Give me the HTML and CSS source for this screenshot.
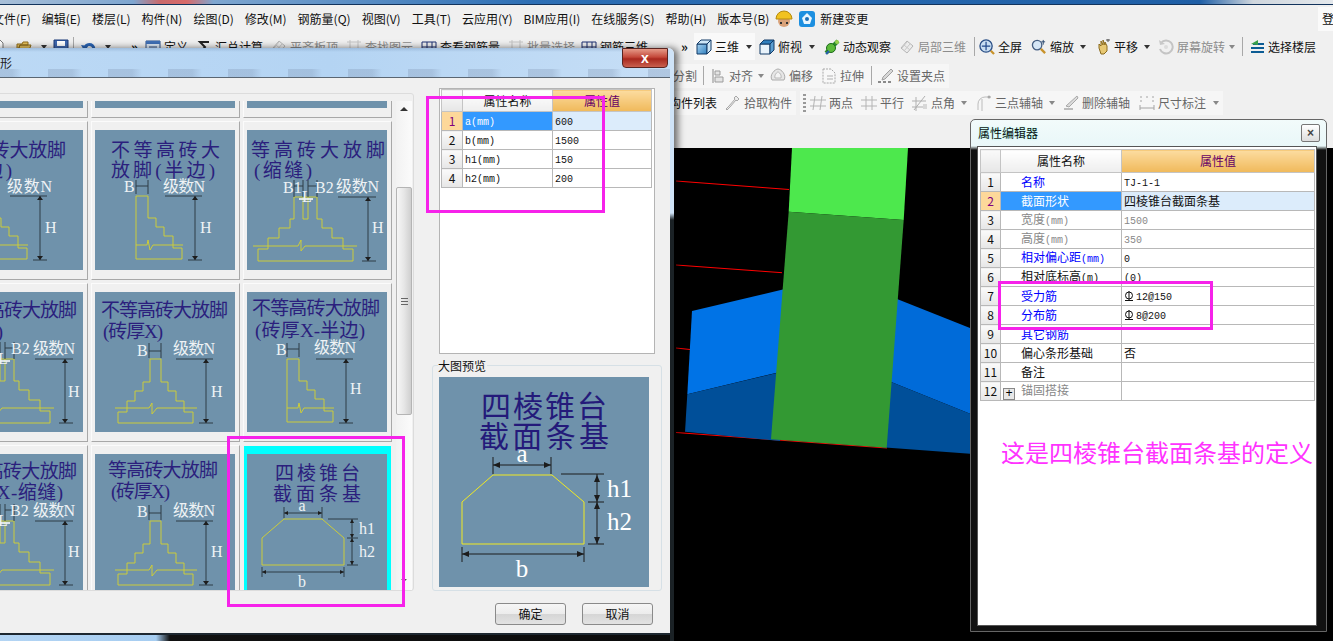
FILE: index.html
```html
<!DOCTYPE html>
<html lang="zh">
<head>
<meta charset="utf-8">
<title>属性编辑器</title>
<link rel="stylesheet" href="styles.css">
</head>
<body>
<svg class="defs" width="0" height="0" aria-hidden="true">
  <defs>
    <linearGradient id="gb" x1="0" y1="0" x2="1" y2="1"><stop offset="0" stop-color="#a9d4f2"/><stop offset="1" stop-color="#2f7fbe"/></linearGradient>
    <symbol id="i-cube" viewBox="0 0 16 16"><path d="M1 5h10v10H1z" fill="url(#gb)" stroke="#123a66"/><path d="M1 5l4-4h10l-4 4zM11 5l4-4v10l-4 4z" fill="#cfe7f7" stroke="#123a66"/></symbol>
    <symbol id="i-top" viewBox="0 0 16 16"><path d="M1 5h10v10H1z" fill="#e8f2fa" stroke="#123a66"/><path d="M1 5l4-4h10l-4 4z" fill="#2f7fbe" stroke="#123a66"/><path d="M11 5l4-4v10l-4 4z" fill="#5b9ed1" stroke="#123a66"/></symbol>
    <symbol id="i-orbit" viewBox="0 0 16 16"><path d="M2 14L14 2" stroke="#2a8a2a" stroke-width="4"/><circle cx="7" cy="9" r="4.5" fill="#5dbb3a" stroke="#1c6a1c"/><path d="M2 15l3-3" stroke="#2a5fb0" stroke-width="2"/><circle cx="13" cy="3" r="2" fill="#9ad14f"/></symbol>
    <symbol id="i-part" viewBox="0 0 16 16" ><path d="M2 9l6-7 6 5-6 7z" fill="#ececec" stroke="#b5b5b5"/><path d="M5 6l6 5M8 3l-5 6M11 5l-6 7" stroke="#c8c8c8" fill="none"/></symbol>
    <symbol id="i-full" viewBox="0 0 17 17"><circle cx="7.5" cy="7.5" r="6.5" fill="#c9def2" stroke="#2b4f86" stroke-width="1.4"/><path d="M7.5 3v9M3 7.5h9" stroke="#234a8c" stroke-width="1.3"/><path d="M12.5 12.5l3.5 3.5" stroke="#c8922a" stroke-width="2.4"/></symbol>
    <symbol id="i-zoom" viewBox="0 0 17 17"><circle cx="6.5" cy="6.5" r="5" fill="#d5e6f6" stroke="#445e82" stroke-width="1.4"/><path d="M10.5 10.5l4.5 4.5" stroke="#c8922a" stroke-width="2.4"/><path d="M13 1v5M11 3h4" stroke="#26466e"/></symbol>
    <symbol id="i-pan" viewBox="0 0 16 16"><path d="M4 9V5l2 2V2l2 4V1l2 5V3l2 4v5l-3 3H6z" fill="#e7c873" stroke="#8a6a1e"/><path d="M11 1h4M13 0v3" stroke="#555"/></symbol>
    <symbol id="i-rot" viewBox="0 0 16 16"><path d="M3 4a6.5 6.5 0 1 1-1 6" fill="none" stroke="#c4c4c4" stroke-width="2"/><path d="M1 1l1 5 5-1z" fill="#c8c8c8"/><circle cx="8" cy="8" r="2" fill="#dcdcdc"/></symbol>
    <symbol id="i-floor" viewBox="0 0 16 16"><path d="M2 13h13M2 9h13M4 5h11" stroke="#0c5c94" stroke-width="2.2"/><path d="M9 1L2 5l7 1" fill="#3aa04a"/></symbol>
    <symbol id="i-align" viewBox="0 0 14 16"><path d="M2 1v14" stroke="#8a8a8a"/><path d="M4 3h5v4H4zM4 9h8v5H4z" fill="#e4e4e4" stroke="#9c9c9c"/></symbol>
    <symbol id="i-offset" viewBox="0 0 16 16"><path d="M2 12C-1 7 5 1 8 1s9 6 6 11z" fill="#e6e6e6" stroke="#acacac"/><path d="M5 10c-1-3 2-6 3-6s4 3 3 6z" fill="#f4f4f4" stroke="#b8b8b8"/></symbol>
    <symbol id="i-stretch" viewBox="0 0 14 16"><path d="M1 1h8l4 4v10H1z" fill="#f8f8f8" stroke="#a8a8a8" stroke-dasharray="2 1"/><path d="M5 8h6M5 11h6" stroke="#b0b0b0"/></symbol>
    <symbol id="i-grip" viewBox="0 0 16 16"><path d="M13 1l2 2-8 8-3 1 1-3z" fill="#d8d8d8" stroke="#a0a0a0"/><path d="M0 14h3M5 14h3M10 14h3" stroke="#8a8a8a" stroke-width="2"/></symbol>
    <symbol id="i-pick" viewBox="0 0 14 16"><path d="M10 1l3 3-2 2-1-1-6 7-3 3-1-1 3-3 6-7-1-1z" fill="#ececec" stroke="#a8a8a8"/></symbol>
    <symbol id="i-two" viewBox="0 0 16 16"><path d="M0 5h16M0 11h16M5 1l-2 14M12 1l-2 14" stroke="#b4b4b4" fill="none"/></symbol>
    <symbol id="i-para" viewBox="0 0 16 16"><path d="M0 5h16M0 11h16M5 1v14M11 1v14" stroke="#b4b4b4" fill="none"/></symbol>
    <symbol id="i-ang" viewBox="0 0 16 16"><path d="M0 6h14M0 12h14M4 2v14M13 1L2 15" stroke="#b0b0b0" fill="none"/><path d="M11 9h4v5h-4z" fill="#d8d8d8"/></symbol>
    <symbol id="i-three" viewBox="0 0 16 16"><path d="M2 15V9a7 7 0 0 1 7-7h6M6 16V4" stroke="#bcbcbc" fill="none"/><circle cx="13" cy="2" r="1.5" fill="#a8a8a8"/></symbol>
    <symbol id="i-del" viewBox="0 0 16 16"><path d="M14 1l1 2-9 9-3-1z" fill="#dcdcdc" stroke="#a8a8a8"/><path d="M1 14h9" stroke="#bcbcbc" stroke-width="2"/></symbol>
    <symbol id="i-size" viewBox="0 0 16 16"><path d="M1 10v5M15 10v5M1 13h14M1 2h2M7 2h2M13 2h2M1 6h2M13 6h2" stroke="#a4a4a4" fill="none"/></symbol>
    <symbol id="i-def" viewBox="0 0 16 16"><path d="M1 2h14v12H1z" fill="#dde8f4" stroke="#2b4f86"/><path d="M1 2h14v3H1z" fill="#3f6fb4"/><path d="M4 8h8M4 11h8" stroke="#2b4f86"/></symbol>
    <symbol id="i-sum" viewBox="0 0 16 16"><path d="M13 3H4l5 5-5 6h9" fill="none" stroke="#222" stroke-width="2"/></symbol>
    <symbol id="i-doc" viewBox="0 0 16 16"><path d="M3 1h8l3 3v11H3z" fill="#fff" stroke="#777"/></symbol>
    <symbol id="i-open" viewBox="0 0 16 16"><path d="M1 5h5l1-2h5v3H4L1 14zM1 14l3-8h11l-3 8z" fill="#e6c15c" stroke="#8f6d1d"/></symbol>
    <symbol id="i-save" viewBox="0 0 16 16"><path d="M1 1h14v14H1z" fill="#3f68b0" stroke="#1d3a78"/><path d="M4 2h8v5H4z" fill="#fff"/></symbol>
    <symbol id="i-undo" viewBox="0 0 16 16"><path d="M4 10C4 4 12 4 13 10c0 2-1 4-3 5" fill="none" stroke="#2a64b4" stroke-width="3"/><path d="M0 6l7 1-3 6z" fill="#2a64b4"/></symbol>
    <symbol id="i-batch" viewBox="0 0 16 16"><path d="M1 3h14M1 13h14M4 1v14M12 1v14" stroke="#c4c4c4"/></symbol>
    <symbol id="i-rebar" viewBox="0 0 16 16"><path d="M1 3h14v10H1zM6 3v10M11 3v10M1 8h14" stroke="#1d2f70" fill="none"/></symbol>
    <g id="half">
      <path class="yl" d="M41 66h12v22h8v9h8v9h9v12h9v11H41z"/>
      <path class="yl" d="M41 115h11l1-5 2 10 3-5h30"/>
      <path class="dk" d="M41 50v14M53 50v14M41 56h12M70 66h37M93 130h14M100 66v64"/>
      <path class="ah" d="M100 66l-3 4h6zM100 130l-3-4h6z"/>
    </g>
    <g id="slot">
      <path class="yl" d="M11 119h10v-11h11V98h11v-9h4V67h23v22h5v9h10v10h11v11h10v12H11z"/>
      <path class="yl" d="M56 67v22h5V67"/>
      <path class="yl" d="M6 116h45l3-6v11l4-5h52"/>
      <path class="dk" d="M47 50v17M56 50v17M61 50v17M70 50v17M47 56h9M61 56h9M91 67h38M115 131h14M121 67v64"/>
      <path class="ah" d="M121 67l-3 4h6zM121 131l-3-4h6z"/>
      <path class="wh" d="M52 69h14"/>
    </g>
    <g id="brick">
      <path class="yl" d="M23 120h9v-11h8V99h8v-9h7V67h11v23h7v9h8v10h8v11h9v11H23z"/>
      <path class="yl" d="M20 116h34l3-5v11l5-6h40"/>
      <path class="dk" d="M54 51v15M66 51v15M54 59h12M81 67h37M104 131h14M111 67v64"/>
      <path class="ah" d="M111 67l-3 4h6zM111 131l-3-4h6z"/>
    </g>
  </defs>
</svg>

<header class="topstrip"></header>

<nav class="menu">
  <span>文件(F)</span><span>编辑(E)</span><span>楼层(L)</span><span>构件(N)</span><span>绘图(D)</span><span>修改(M)</span><span>钢筋量(Q)</span><span>视图(V)</span><span>工具(T)</span><span>云应用(Y)</span><span>BIM应用(I)</span><span>在线服务(S)</span><span>帮助(H)</span><span>版本号(B)</span>
  <span class="menu-icons">
    <svg class="ic20" viewBox="0 0 20 20"><circle cx="10" cy="12" r="6" fill="#d9a27a"/><path d="M2 10a8 8 0 0 1 16 0z" fill="#f1c21f" stroke="#b58a0e"/><path d="M6 14h2M12 14h2" stroke="#333" stroke-width="2"/></svg>
    <svg class="ic16" viewBox="0 0 16 16"><rect x="0" y="0" width="16" height="16" rx="3" fill="#1c8fe0"/><path d="M8 2l5 5-2 6H5L3 7z" fill="#e8f6ff"/><circle cx="8" cy="8" r="2" fill="#1c6fb8"/></svg>
    <span>新建变更</span>
  </span>
  <span class="login">登</span>
</nav>

<section class="bar row1">
  <div class="bar-left">
    <svg class="ic first"><use href="#i-doc"/></svg>
    <svg class="ic ml11"><use href="#i-open"/></svg><i class="caret ml9"></i>
    <svg class="ic ml6"><use href="#i-save"/></svg><i class="sep ml4"></i>
    <svg class="ic ml7"><use href="#i-undo"/></svg><i class="caret ml8"></i>
    <b class="more ml20">»</b>
    <span class="ti ml1"><svg class="ic"><use href="#i-def"/></svg>定义</span>
    <span class="ti ml8"><svg class="ic"><use href="#i-sum"/></svg>汇总计算</span>
    <span class="ti ml8 off"><svg class="ic"><use href="#i-part"/></svg>平齐板顶</span>
    <span class="ti ml8 off"><svg class="ic"><use href="#i-batch"/></svg>查找图元</span>
    <span class="ti ml8"><svg class="ic"><use href="#i-rebar"/></svg>查看钢筋量</span>
    <span class="ti ml8 off"><svg class="ic"><use href="#i-batch"/></svg>批量选择</span>
    <span class="ti ml6"><svg class="ic"><use href="#i-rebar"/></svg>钢筋三维</span>
  </div>
  <b class="more ml4">»</b>
  <span class="pressed"><span class="ti"><svg class="ic"><use href="#i-cube"/></svg>三维</span><i class="caret ml7"></i></span>
  <span class="ti ml4"><svg class="ic"><use href="#i-top"/></svg>俯视</span><i class="caret ml7"></i>
  <span class="ti ml9"><svg class="ic"><use href="#i-orbit"/></svg>动态观察</span>
  <span class="ti ml8 off"><svg class="ic"><use href="#i-part"/></svg>局部三维</span>
  <i class="sep ml8"></i>
  <span class="ti ml4"><svg class="ic"><use href="#i-full"/></svg>全屏</span>
  <span class="ti ml9"><svg class="ic"><use href="#i-zoom"/></svg>缩放</span><i class="caret ml6"></i>
  <span class="ti ml9"><svg class="ic"><use href="#i-pan"/></svg>平移</span><i class="caret ml6"></i>
  <span class="ti ml8 off"><svg class="ic"><use href="#i-rot"/></svg>屏幕旋转</span><i class="caret ml4 faint"></i>
  <i class="sep ml7"></i>
  <span class="ti ml6"><svg class="ic"><use href="#i-floor"/></svg>选择楼层</span>
</section>

<section class="bar row2">
  <div class="band">
    <span class="ti mid">分割</span>
    <i class="sep ml6"></i>
    <span class="ti ml6 mid"><svg class="ic"><use href="#i-align"/></svg>对齐</span><i class="caret ml5 faint"></i>
    <span class="ti ml6 mid"><svg class="ic"><use href="#i-offset"/></svg>偏移</span>
    <span class="ti ml8 mid"><svg class="ic"><use href="#i-stretch"/></svg>拉伸</span>
    <i class="sep ml7"></i>
    <span class="ti ml6 mid"><svg class="ic"><use href="#i-grip"/></svg>设置夹点</span>
  </div>
</section>

<section class="bar row3">
  <div class="band">
    <span class="ti">构件列表</span>
    <span class="ti ml8 mid"><svg class="ic"><use href="#i-pick"/></svg>拾取构件</span>
  </div>
  <div class="band ml4">
    <i class="grip ml3"></i>
    <span class="ti ml4 mid"><svg class="ic"><use href="#i-two"/></svg>两点</span>
    <span class="ti ml8 mid"><svg class="ic"><use href="#i-para"/></svg>平行</span>
    <span class="ti ml8 mid"><svg class="ic"><use href="#i-ang"/></svg>点角</span><i class="caret ml6 faint"></i>
    <span class="ti ml9 mid"><svg class="ic"><use href="#i-three"/></svg>三点辅轴</span><i class="caret ml6 faint"></i>
    <span class="ti ml8 mid"><svg class="ic"><use href="#i-del"/></svg>删除辅轴</span>
    <span class="ti ml9 mid"><svg class="ic"><use href="#i-size"/></svg>尺寸标注</span><i class="caret ml7 faint"></i>
  </div>
</section>

<main class="canvas">
  <svg class="scene" viewBox="670 147 663 494" width="663" height="494">
    <path class="red" d="M676 180l113 8.500M676 264l106 7.700M676 347l14 1.500M676 431.500l211 15.500"/>
    <path fill="#0073e6" d="M692 310l95-22.500-5 83-94.700 22.800z"/>
    <path fill="#004f99" d="M687.300 393.300L782 370.800 780 440l-95-9.300z"/>
    <path fill="#006bd9" d="M892 295.900L970 327v85.700L885 378.600z"/>
    <path fill="#004f99" d="M885 378.600l85 34.100v40l-88-6.500z"/>
    <path fill="#4de84d" d="M792 147h116l-4.300 72-115-8.300z"/>
    <path fill="#339933" d="M788.700 210.700l115 8.300-17 227.700L771 438.300z"/>
  </svg>
</main>

<div class="dialog">
  <div class="dlg-title">
    <span>图形</span>
    <button class="dlg-close" type="button">x</button>
  </div>
  <div class="dlg-client">
    <div class="list-panel">
      <div class="scroller">
        <div class="cards">
          <div class="card"><div class="thumb"></div></div>
          <div class="card"><div class="thumb"></div></div>
          <div class="card"><div class="thumb"></div></div>

          <div class="card"><svg class="thumb" viewBox="0 0 140 140">
            <text class="tt" x="10" y="27" textLength="113">等高砖大放脚</text>
            <text class="tt" x="10" y="47" textLength="59">(半边)</text>
            <use href="#half" x="-3"/>
            <text class="lb" x="64" y="62" textLength="45">级数N</text>
            <text class="lb" x="102" y="103">H</text>
          </svg></div>
          <div class="card"><svg class="thumb" viewBox="0 0 140 140">
            <text class="tt" x="16" y="27" textLength="109">不等高砖大</text>
            <text class="tt" x="16" y="47" textLength="104">放脚(半边)</text>
            <use href="#half"/>
            <text class="lb" x="29" y="62">B</text>
            <text class="lb" x="68" y="62" textLength="42">级数N</text>
            <text class="lb" x="105" y="103">H</text>
          </svg></div>
          <div class="card"><svg class="thumb" viewBox="0 0 140 140">
            <text class="tt" x="4" y="27" textLength="134">等高砖大放脚</text>
            <text class="tt" x="7" y="47" textLength="58">(缩缝)</text>
            <use href="#slot"/>
            <text class="lb" x="36" y="63">B1</text>
            <text class="lb" x="68" y="63">B2</text>
            <text class="lb" x="55" y="72">L</text>
            <text class="lb" x="89" y="62" textLength="43">级数N</text>
            <text class="lb" x="125" y="103">H</text>
          </svg></div>

          <div class="card"><svg class="thumb" viewBox="0 0 140 140">
            <text class="tt" x="7" y="25" textLength="127">不等高砖大放脚</text>
            <text class="tt" x="8" y="46" textLength="52">(缩缝)</text>
            <use href="#slot" x="1"/>
            <text class="lb" x="68" y="62">B2</text>
            <text class="lb" x="55" y="72">L</text>
            <text class="lb" x="90" y="62" textLength="42">级数N</text>
            <text class="lb" x="125" y="105">H</text>
          </svg></div>
          <div class="card"><svg class="thumb" viewBox="0 0 140 140">
            <text class="tt" x="6" y="25" textLength="127">不等高砖大放脚</text>
            <text class="tt" x="8" y="46" textLength="60">(砖厚X)</text>
            <use href="#brick"/>
            <text class="lb" x="42" y="64">B</text>
            <text class="lb" x="78" y="62" textLength="42">级数N</text>
            <text class="lb" x="116" y="105">H</text>
          </svg></div>
          <div class="card"><svg class="thumb" viewBox="0 0 140 140">
            <text class="tt" x="5" y="23" textLength="128">不等高砖大放脚</text>
            <text class="tt" x="8" y="45" textLength="110">(砖厚X-半边)</text>
            <use href="#half" x="-1" y="1"/>
            <text class="lb" x="29" y="63">B</text>
            <text class="lb" x="67" y="61" textLength="42">级数N</text>
            <text class="lb" x="103" y="102">H</text>
          </svg></div>

          <div class="card"><svg class="thumb" viewBox="0 0 140 140">
            <text class="tt" x="5" y="24" textLength="129">不等高砖大放脚</text>
            <text class="tt" x="8" y="45" textLength="112">(砖厚X-缩缝)</text>
            <use href="#slot" x="1"/>
            <text class="lb" x="67" y="62">B2</text>
            <text class="lb" x="55" y="72">L</text>
            <text class="lb" x="90" y="62" textLength="42">级数N</text>
            <text class="lb" x="125" y="103">H</text>
          </svg></div>
          <div class="card"><svg class="thumb" viewBox="0 0 140 140">
            <text class="tt" x="13" y="23" textLength="110">等高砖大放脚</text>
            <text class="tt" x="16" y="44" textLength="59">(砖厚X)</text>
            <use href="#brick"/>
            <text class="lb" x="42" y="63">B</text>
            <text class="lb" x="78" y="62" textLength="42">级数N</text>
            <text class="lb" x="116" y="103">H</text>
          </svg></div>
          <div class="card sel"><svg class="thumb" viewBox="0 0 140 140">
            <text class="tt" x="28" y="26" textLength="85">四棱锥台</text>
            <text class="tt" x="26" y="47" textLength="88">截面条基</text>
            <path class="yl" d="M37 65h38l22 19v27H15V84z"/>
            <path class="dk" d="M37 53v11M75 53v11M37 59h38M81 65h30M100 84h11M100 111h11M105 65v46M15 113v10M97 113v10M15 118h82"/>
            <path class="ah" d="M37 59l4-2v4zM75 59l-4-2v4zM105 65l-2 4h4zM105 84l-2-4h4zM105 84l-2 4h4zM105 111l-2-4h4zM15 118l4-2v4zM97 118l-4-2v4z"/>
            <text class="lb" x="55" y="57" text-anchor="middle">a</text>
            <text class="lb" x="112" y="80">h1</text>
            <text class="lb" x="112" y="103">h2</text>
            <text class="lb" x="55" y="133" text-anchor="middle">b</text>
          </svg></div>
        </div>
      </div>
      <div class="vscroll">
        <i class="sb-up"></i>
        <div class="sb-thumb"><i class="sb-grip"></i></div>
        <i class="sb-down"></i>
      </div>
    </div>

    <div class="dlg-right">
      <div class="prop-box">
        <table class="grid small">
          <thead><tr><th class="cn"></th><th>属性名称</th><th class="hv">属性值</th></tr></thead>
          <tbody>
            <tr class="cur"><td class="cn">1</td><td class="nm"><span class="m">a(mm)</span></td><td><span class="m">600</span></td></tr>
            <tr><td class="cn">2</td><td class="nm"><span class="m">b(mm)</span></td><td><span class="m">1500</span></td></tr>
            <tr><td class="cn">3</td><td class="nm"><span class="m">h1(mm)</span></td><td><span class="m">150</span></td></tr>
            <tr><td class="cn">4</td><td class="nm"><span class="m">h2(mm)</span></td><td><span class="m">200</span></td></tr>
          </tbody>
        </table>
      </div>
      <div class="preview">
        <span class="legend">大图预览</span>
        <svg class="bigimg" viewBox="0 0 210 210">
          <text class="tb" x="42" y="40" textLength="126">四棱锥台</text>
          <text class="tb" x="40" y="70" textLength="130">截面条基</text>
          <path class="yb" d="M54 98h59l32 27v42H23v-42z"/>
          <path class="db" d="M54 80v17M112 80v17M54 88h58M122 97h43M149 125h16M149 167h16M158 97v70M23 170v15M145 170v15M23 177h122"/>
          <path class="ahb" d="M54 88l7-3v6zM112 88l-7-3v6zM158 98l-3 7h6zM158 125l-3-7h6zM158 125l-3 7h6zM158 167l-3-7h6zM23 177l7-3v6zM145 177l-7-3v6z"/>
          <text class="lbb" x="83" y="85" text-anchor="middle">a</text>
          <text class="lbb" x="168" y="120">h1</text>
          <text class="lbb" x="168" y="153">h2</text>
          <text class="lbb" x="83" y="200" text-anchor="middle">b</text>
        </svg>
      </div>
      <div class="actions">
        <button class="btn" type="button">确定</button>
        <button class="btn" type="button">取消</button>
      </div>
    </div>
  </div>
  <div class="dlg-foot"></div>
</div>

<aside class="propwin">
  <div class="pw-title">
    <span>属性编辑器</span>
    <button class="pw-close" type="button">×</button>
  </div>
  <div class="pw-panel">
    <table class="grid wide">
      <thead><tr><th class="cn"></th><th>属性名称</th><th class="hv">属性值</th></tr></thead>
      <tbody>
        <tr><td class="cn">1</td><td class="nm blue">名称</td><td><span class="m">TJ-1-1</span></td></tr>
        <tr class="cur"><td class="cn">2</td><td class="nm">截面形状</td><td>四棱锥台截面条基</td></tr>
        <tr class="dim"><td class="cn">3</td><td class="nm">宽度<span class="m">(mm)</span></td><td><span class="m">1500</span></td></tr>
        <tr class="dim"><td class="cn">4</td><td class="nm">高度<span class="m">(mm)</span></td><td><span class="m">350</span></td></tr>
        <tr><td class="cn">5</td><td class="nm blue">相对偏心距<span class="m">(mm)</span></td><td><span class="m">0</span></td></tr>
        <tr><td class="cn">6</td><td class="nm">相对底标高<span class="m">(m)</span></td><td><span class="m">(0)</span></td></tr>
        <tr><td class="cn">7</td><td class="nm blue">受力筋</td><td><svg class="steel" viewBox="0 0 10 10"><circle cx="5" cy="4.500" r="3.500"/><path d="M5 0v9M1 9.500h8"/></svg><span class="m">12@150</span></td></tr>
        <tr><td class="cn">8</td><td class="nm blue">分布筋</td><td><svg class="steel" viewBox="0 0 10 10"><circle cx="5" cy="4.500" r="3.500"/><path d="M5 0v9M1 9.500h8"/></svg><span class="m">8@200</span></td></tr>
        <tr><td class="cn">9</td><td class="nm blue">其它钢筋</td><td></td></tr>
        <tr><td class="cn">10</td><td class="nm">偏心条形基础</td><td>否</td></tr>
        <tr><td class="cn">11</td><td class="nm">备注</td><td></td></tr>
        <tr class="dim"><td class="cn">12</td><td class="nm"><i class="plus">+</i>锚固搭接</td><td></td></tr>
      </tbody>
    </table>
    <p class="note">这是四棱锥台截面条基的定义</p>
  </div>
</aside>

<div class="mark mark-table"></div>
<div class="mark mark-card"></div>
<div class="mark mark-rows"></div>
</body>
</html>
```

FILE: styles.css
```css
* { box-sizing: border-box; }
html, body { margin: 0; padding: 0; height: 641px; overflow: hidden; }
body {
  position: relative;
  background: #f0f0f0;
  color: #111;
  font: 12px/16px "Noto Sans CJK SC", "Liberation Sans", sans-serif;
}
.defs { position: absolute; }

.topstrip {
  height: 5px;
  border-bottom: 1px solid #12335c;
  background: linear-gradient(90deg, #a8bfd8 0, #7ea6d0 10%, #c9696b 12%, #d86a6a 14%, #7ea6d0 16%, #2d6fb5 40%, #1f5fa6 90%, #cfd6dd 94%, #e4e8ec 100%);
}

.menu { display: flex; align-items: center; height: 28px; gap: 11px; margin-left: -8px; white-space: nowrap; }
.menu-icons { display: flex; align-items: center; gap: 5px; margin-left: -6px; }
.ic20 { width: 20px; height: 20px; }
.ic16 { width: 16px; height: 16px; }
.login { margin-left: auto; width: 15px; background: #fafafa; line-height: 24px; padding-left: 4px; overflow: hidden; }

.bar { display: flex; align-items: center; white-space: nowrap; }
.row1 { height: 27px; }
.row2 { height: 31px; padding-left: 673px; }
.row3 { height: 24px; padding-left: 669px; }
.bar-left { display: flex; align-items: center; width: 677px; flex: none; overflow: hidden; }
.band { display: flex; align-items: center; height: 24px; padding-right: 4px; background: #f6f6f6; }
.pressed { display: flex; align-items: center; width: 61px; height: 27px; padding-left: 2px; background: #f9f9f9; }
.ti { display: inline-flex; align-items: center; gap: 3px; color: #111; flex: none; }
.ti.off { color: #8c8c8c; }
.ti.mid { color: #666; }
.ic { width: 16px; height: 16px; flex: none; }
.ic.first { margin-left: -11px; }
.more { width: 13px; font-weight: 700; font-size: 13px; line-height: 13px; flex: none; }
.caret { width: 0; height: 0; flex: none; border: 3px solid transparent; border-top: 4px solid #333; border-bottom: 0; }
.caret.faint { border-top-color: #888; }
.sep { width: 1px; height: 19px; background: #a8a8a8; flex: none; }
.grip { width: 3px; height: 18px; flex: none; background: repeating-linear-gradient(180deg, #999 0 2px, transparent 2px 4px); }
.ml1 { margin-left: 1px; }
.ml3 { margin-left: 3px; }
.ml4 { margin-left: 4px; }
.ml5 { margin-left: 5px; }
.ml6 { margin-left: 6px; }
.ml7 { margin-left: 7px; }
.ml8 { margin-left: 8px; }
.ml9 { margin-left: 9px; }
.ml11 { margin-left: 11px; }
.ml20 { margin-left: 20px; }

.canvas { height: 494px; margin-top: 33px; background: #000; display: flex; justify-content: flex-end; }
.scene { display: block; }
.red { fill: none; stroke: #f00; stroke-width: 1; }

/* dialog */
.dialog {
  position: absolute; left: -12px; top: 48px;
  width: 686px; height: 593px;
  padding-right: 4px;
  border-radius: 6px 6px 0 0;
  background: linear-gradient(180deg, #cfe3f7 0, #cfe3f7 165px, #1b2226 172px);
  box-shadow: 4px 0 7px rgba(0, 0, 0, .55);
}
.dlg-title {
  display: flex; justify-content: space-between; align-items: center;
  height: 29px; padding-right: 2px;
  background:
    linear-gradient(180deg, rgba(90,120,160,.28), rgba(90,120,160,0)) 0 0 / 100% 4px no-repeat,
    repeating-linear-gradient(90deg, rgba(120,140,170,.28) 0 24px, transparent 34px 60px) 0 100% / 100% 8px no-repeat,
    linear-gradient(90deg, #bcd9f5, #b4d4f3 50%, #c6def6);
  border-radius: 6px 6px 0 0;
  font-size: 12px; color: #222;
}
.dlg-close {
  width: 46px; height: 20px; margin-top: -9px; padding: 0; border: 1px solid #5a2420; border-radius: 0 0 4px 4px;
  background: linear-gradient(180deg, #e59a88, #c4483a 45%, #a8281e 55%, #c9604f);
  color: #fff; font: 700 14px/16px "Liberation Sans", sans-serif;
}
.dlg-client { display: flex; height: 556px; padding-left: 7px; border-top: 1px solid #5a6672; background: #f0f0f0; }
.dlg-foot { height: 8px; border-top: 2px solid #1d2730; background: linear-gradient(90deg, #b4d5f4 0, #a6cdf1 168px, #111 182px, #0b0b0b 100%); }

.list-panel { display: flex; flex: none; width: 419px; height: 498px; margin-top: 15px; padding-top: 7px; border: 1px solid #dcdcdc; border-radius: 3px; }
.scroller { flex: 1; min-width: 0; overflow: hidden; }
.cards { display: grid; grid-template-columns: repeat(3, 149px); grid-auto-rows: 159px; gap: 3px; margin: -142px 0 0 -57px; }
.card {
  padding: 8px 4px 9px 3px;
  border: 1px solid;
  border-color: #fbfbfb #a8a8a8 #a8a8a8 #fbfbfb;
  background: #f0f0f0;
}
.card.sel { background: #0ff; border-color: #f0f0f0; }
.thumb { display: block; width: 140px; height: 140px; background: #6f92ab; }
.tt { fill: #2b1f7d; font: 19px "Liberation Serif", "Noto Sans CJK SC", serif; }
.lb { fill: #eef2f5; font: 16px "Liberation Serif", "Noto Sans CJK SC", serif; }
.yl { fill: none; stroke: #cccc3a; stroke-width: 1; }
.dk { fill: none; stroke: #2f3c46; stroke-width: 1; }
.ah { fill: #1d1d1d; }
.wh { fill: none; stroke: #fff; stroke-width: 1.500; }

.vscroll { display: flex; flex-direction: column; align-items: center; flex: none; width: 16px; margin-right: 1px; background: linear-gradient(90deg, #f2f2f2, #fbfbfb); }
.sb-up { width: 0; height: 0; margin-top: 6px; border: 4px solid transparent; border-top: 0; border-bottom: 4px solid #333; }
.sb-down { width: 0; height: 0; margin-top: auto; margin-bottom: 8px; border: 3px solid transparent; border-bottom: 0; border-top: 3px solid #555; }
.sb-thumb {
  display: flex; align-items: center; justify-content: center;
  width: 16px; height: 228px; margin-top: 76px;
  border: 1px solid #b4b4b4; border-radius: 2px;
  background: linear-gradient(90deg, #f6f6f6, #e6e6e6 50%, #cfcfcf);
}
.sb-grip { width: 7px; height: 7px; background: repeating-linear-gradient(180deg, #666 0 1px, transparent 1px 3px); }

.dlg-right { flex: none; width: 230px; margin-left: 18px; padding-top: 10px; }
.prop-box { width: 216px; height: 266px; margin-left: 7px; padding: 0 0 0 1px; border: 1px solid #b4b4b4; background: #fff; }
.preview { position: relative; height: 226px; margin-top: 11px; padding: 11px 0 0 6px; border: 1px solid #d6e0e6; border-radius: 3px; }
.legend { position: absolute; left: 5px; top: -7px; background: #f0f0f0; line-height: 14px; padding-right: 1px; }
.bigimg { display: block; width: 210px; height: 210px; background: #6f92ab; }
.tb { fill: #241a7a; font: 30px "Noto Sans CJK SC", serif; }
.lbb { fill: #fff; font: 25px "Liberation Serif", serif; }
.yb { fill: none; stroke: #f2ea22; stroke-width: 1; }
.db { fill: none; stroke: #1c1c1c; stroke-width: 1; }
.ahb { fill: #1c1c1c; }
.actions { display: flex; justify-content: flex-end; gap: 16px; margin-top: 12px; padding-right: 9px; }
.btn {
  width: 71px; height: 22px; padding: 0;
  border: 1px solid #8a8a8a; border-radius: 3px;
  background: linear-gradient(180deg, #f6f6f6, #ececec 50%, #d6d6d6 52%, #e2e2e2);
  color: #111; font: 12px/16px "Noto Sans CJK SC", sans-serif;
}

/* tables */
.grid { border-collapse: collapse; table-layout: fixed; }
.grid th { height: 21px; padding: 0; font-weight: 400; line-height: 14px; text-align: center; border: 1px solid #c4c4c4; background: linear-gradient(180deg, #fff, #eee); }
.grid th.hv { color: #660066; background: linear-gradient(180deg, #fcdca0, #f0b95a); }
.grid td { height: 19px; padding: 0 2px; border: 1px solid #b8b8b8; background: #fff; line-height: 14px; white-space: nowrap; overflow: hidden; }
.grid td.cn, .grid th.cn { text-align: center; background: linear-gradient(180deg, #fafafa, #e6e6e6); padding: 0; }
.grid .cur td { background: #dcecfb; }
.grid .cur td.cn { background: #fdd89a; color: #800080; }
.grid .cur td.nm { background: #3399ff; color: #fff; }
.small { width: 211px; }
.small .cn { width: 21px; }
.small th:nth-child(2) { width: 90px; }
.small th { height: 22px; }
.wide { width: 335px; }
.wide .cn { width: 20px; }
.wide th:nth-child(2) { width: 121px; }
.wide th { height: 23px; }
.wide td.nm { padding-left: 20px; }
.m { font: 10px/14px "Liberation Mono", monospace; }
.blue { color: #00f; }
.dim td, .dim td.nm { color: #888; }
.dim td.cn { color: #111; }
.steel { width: 10px; height: 10px; margin-right: 2px; vertical-align: -1px; fill: none; stroke: #111; stroke-width: 1; }
.plus {
  display: inline-block; width: 12px; height: 12px; margin: 0 6px 0 -18px;
  border: 1px solid #888; background: #e8e8e8; color: #000; font: 12px/10px "Liberation Mono", monospace; text-align: center; vertical-align: -2px;
}

/* property window */
.propwin {
  position: absolute; left: 970px; top: 119px;
  width: 357px; height: 513px;
  padding: 0 9px 6px 6px;
  border: 1px solid #666; border-radius: 5px 5px 0 0;
  background: linear-gradient(180deg, #f2fbfb 0, #e9f7f8 26px, #111 30px);
}
.pw-title { display: flex; justify-content: space-between; align-items: center; height: 26px; padding-left: 1px; margin-right: -3px; }
.pw-title span { text-shadow: 0 0 2px #9fe; }
.pw-close { width: 19px; height: 18px; padding: 0; border: 1px solid #777; border-radius: 2px; background: linear-gradient(180deg, #fff, #ddd); font: 700 12px/14px "Liberation Sans", sans-serif; color: #444; }
.pw-panel { height: 480px; padding: 2px 0 0 2px; border: 1px solid #555; background: #fff; }
.note { margin: 37px 0 0 21px; color: #ff33ff; font-size: 24px; line-height: 28px; white-space: nowrap; }

/* annotation frames */
.mark { position: absolute; border: 3px solid #f622ea; }
.mark-table { left: 426px; top: 96px; width: 179px; height: 117px; }
.mark-card { left: 227px; top: 436px; width: 178px; height: 171px; }
.mark-rows { left: 998px; top: 281px; width: 215px; height: 49px; }
```
